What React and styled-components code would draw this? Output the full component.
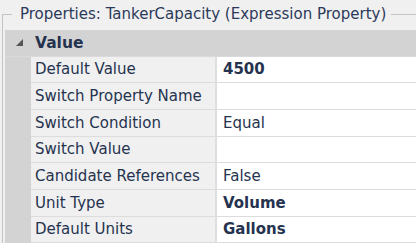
import React from "react";
import styled, { createGlobalStyle } from "styled-components";

const GlobalStyle = createGlobalStyle`
	html, body {
		margin: 0;
		padding: 0;
		background: #f0f0f0;
		overflow: hidden;
	}
	body {
		font-family: "DejaVu Sans", Tahoma, sans-serif;
		color: #25334f;
	}
`;

const Group = styled.fieldset`
	margin: 6px 0 0 2px;
	padding: 0 0 0 2px;
	border: none;
	border-top: 1px solid #c4c4c4;
	border-left: 1px solid #c4c4c4;
	width: 420px;
	height: 240px;
	box-sizing: border-box;
	min-width: 0;
`;

const Legend = styled.legend`
	margin-left: 7px;
	padding: 0 5px 0 8px;
	font-size: 15px;
	line-height: 16px;
	color: #2c3a5a;
	white-space: nowrap;
`;

const Grid = styled.div`
	display: grid;
	grid-template-columns: 26px 186px 1fr;
	grid-auto-rows: 26.667px;
	margin-top: 8px;
	font-size: 15px;
`;

const Gutter = styled.div`
	background: #d3d3d3;
	border-bottom: ${(p) => (p.$category ? "1px solid #dadada" : "none")};
	box-sizing: border-box;
	display: flex;
	align-items: center;
	justify-content: center;
`;

const CategoryLabel = styled.div`
	grid-column: 2 / 4;
	background: #d3d3d3;
	box-sizing: border-box;
	display: flex;
	align-items: center;
	padding-left: 4px;
	font-weight: bold;
	font-size: 15.5px;
	border-bottom: 1px solid #dadada;
`;

const NameCell = styled.div`
	background: #f0f0f0;
	box-sizing: border-box;
	border-bottom: 1px solid #dcdcdc;
	border-right: 2px solid #dedede;
	display: flex;
	align-items: center;
	padding-left: 4px;
	white-space: nowrap;
	overflow: hidden;
`;

const ValueCell = styled.div`
	background: #ffffff;
	box-sizing: border-box;
	border-bottom: 1px solid #dcdcdc;
	display: flex;
	align-items: center;
	padding-left: 6px;
	font-weight: ${(p) => (p.$bold ? "bold" : "normal")};
	white-space: nowrap;
`;

const Triangle = styled.svg`
	width: 7px;
	height: 7px;
	margin-left: 2px;
`;

const rows = [
	{ name: "Default Value", value: "4500", bold: true },
	{ name: "Switch Property Name", value: "" },
	{ name: "Switch Condition", value: "Equal" },
	{ name: "Switch Value", value: "" },
	{ name: "Candidate References", value: "False" },
	{ name: "Unit Type", value: "Volume", bold: true },
	{ name: "Default Units", value: "Gallons", bold: true },
];

export default function App() {
	return (
		<>
			<GlobalStyle />
			<Group>
				<Legend>Properties: TankerCapacity (Expression Property)</Legend>
				<Grid>
					<Gutter $category>
						<Triangle viewBox="0 0 7 7">
							<polygon points="7,0 7,7 0,7" fill="#555555" />
						</Triangle>
					</Gutter>
					<CategoryLabel>Value</CategoryLabel>
					{rows.map((r) => (
						<React.Fragment key={r.name}>
							<Gutter />
							<NameCell>{r.name}</NameCell>
							<ValueCell $bold={r.bold}>{r.value}</ValueCell>
						</React.Fragment>
					))}
				</Grid>
			</Group>
		</>
	);
}
